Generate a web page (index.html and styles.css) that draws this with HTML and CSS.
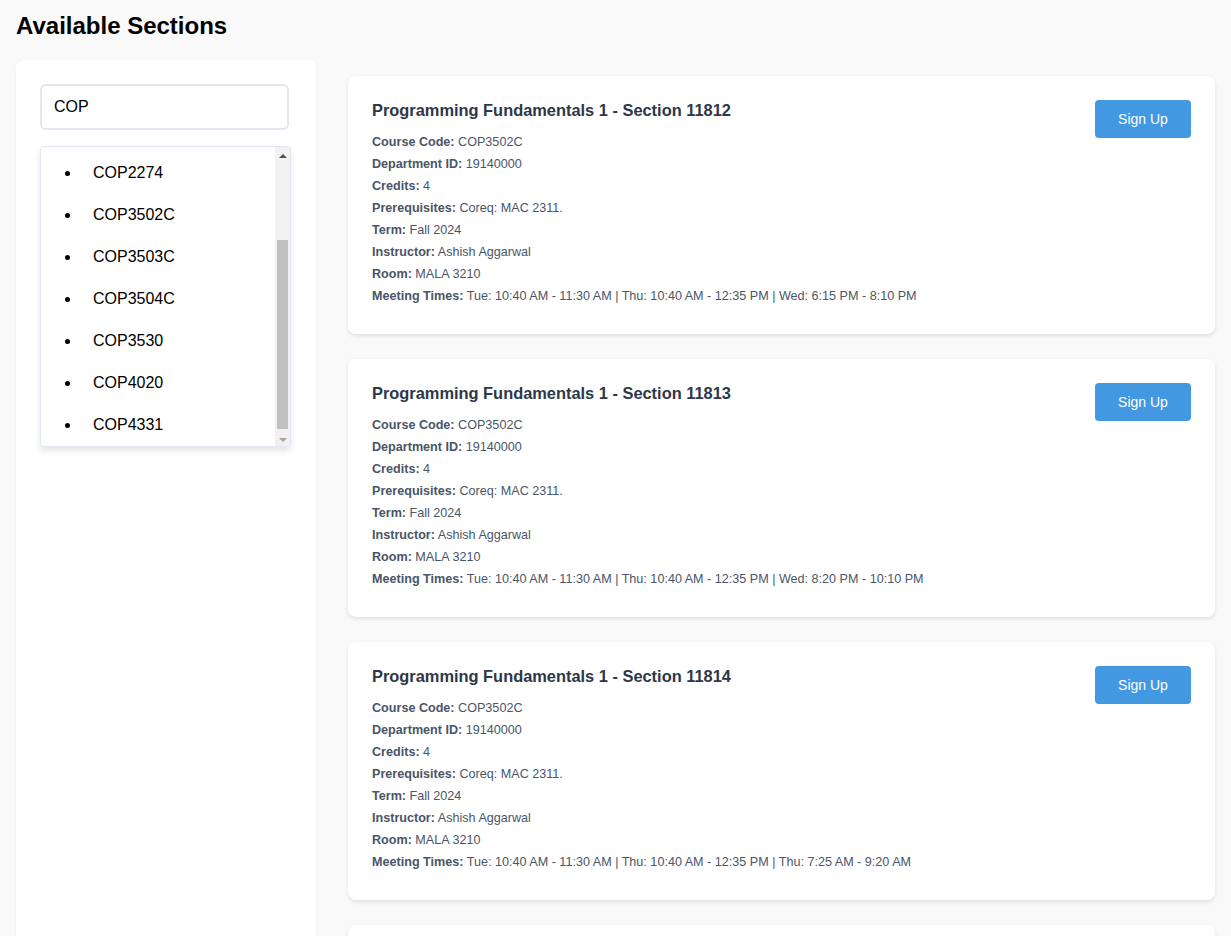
FILE: index.html
```html
<!DOCTYPE html>
<html lang="en">
<head>
<meta charset="utf-8">
<title>Available Sections</title>
<link rel="stylesheet" href="styles.css">
</head>
<body>
<div class="page">
  <h1 class="page-title">Available Sections</h1>
  <div class="layout">
    <aside class="sidebar">
      <input class="search" type="text" value="COP">
      <div class="dropdown">
        <div class="list-viewport">
          <ul class="course-list">
            <li>COP2220</li>
            <li>COP2271</li>
            <li>COP2273</li>
            <li>COP2274</li>
            <li>COP3502C</li>
            <li>COP3503C</li>
            <li>COP3504C</li>
            <li>COP3530</li>
            <li>COP4020</li>
            <li>COP4331</li>
          </ul>
        </div>
        <div class="scrollbar">
          <div class="sb-btn sb-up"><span class="tri-up"></span></div>
          <div class="sb-track"><div class="sb-thumb"></div></div>
          <div class="sb-btn sb-down"><span class="tri-down"></span></div>
        </div>
      </div>
    </aside>
    <main class="sections">
      <div class="card">
        <div class="card-body">
          <h3 class="card-title">Programming Fundamentals 1 - Section 11812</h3>
          <p><b>Course Code:</b> COP3502C</p>
          <p><b>Department ID:</b> 19140000</p>
          <p><b>Credits:</b> 4</p>
          <p><b>Prerequisites:</b> Coreq: MAC 2311.</p>
          <p><b>Term:</b> Fall 2024</p>
          <p><b>Instructor:</b> Ashish Aggarwal</p>
          <p><b>Room:</b> MALA 3210</p>
          <p><b>Meeting Times:</b> Tue: 10:40 AM - 11:30 AM | Thu: 10:40 AM - 12:35 PM | Wed: 6:15 PM - 8:10 PM</p>
        </div>
        <button class="signup">Sign Up</button>
      </div>
      <div class="card">
        <div class="card-body">
          <h3 class="card-title">Programming Fundamentals 1 - Section 11813</h3>
          <p><b>Course Code:</b> COP3502C</p>
          <p><b>Department ID:</b> 19140000</p>
          <p><b>Credits:</b> 4</p>
          <p><b>Prerequisites:</b> Coreq: MAC 2311.</p>
          <p><b>Term:</b> Fall 2024</p>
          <p><b>Instructor:</b> Ashish Aggarwal</p>
          <p><b>Room:</b> MALA 3210</p>
          <p><b>Meeting Times:</b> Tue: 10:40 AM - 11:30 AM | Thu: 10:40 AM - 12:35 PM | Wed: 8:20 PM - 10:10 PM</p>
        </div>
        <button class="signup">Sign Up</button>
      </div>
      <div class="card">
        <div class="card-body">
          <h3 class="card-title">Programming Fundamentals 1 - Section 11814</h3>
          <p><b>Course Code:</b> COP3502C</p>
          <p><b>Department ID:</b> 19140000</p>
          <p><b>Credits:</b> 4</p>
          <p><b>Prerequisites:</b> Coreq: MAC 2311.</p>
          <p><b>Term:</b> Fall 2024</p>
          <p><b>Instructor:</b> Ashish Aggarwal</p>
          <p><b>Room:</b> MALA 3210</p>
          <p><b>Meeting Times:</b> Tue: 10:40 AM - 11:30 AM | Thu: 10:40 AM - 12:35 PM | Thu: 7:25 AM - 9:20 AM</p>
        </div>
        <button class="signup">Sign Up</button>
      </div>
      <div class="card">
        <div class="card-body">
          <h3 class="card-title">Programming Fundamentals 1 - Section 11815</h3>
          <p><b>Course Code:</b> COP3502C</p>
          <p><b>Department ID:</b> 19140000</p>
          <p><b>Credits:</b> 4</p>
          <p><b>Prerequisites:</b> Coreq: MAC 2311.</p>
          <p><b>Term:</b> Fall 2024</p>
          <p><b>Instructor:</b> Ashish Aggarwal</p>
          <p><b>Room:</b> MALA 3210</p>
          <p><b>Meeting Times:</b> Tue: 10:40 AM - 11:30 AM | Thu: 10:40 AM - 12:35 PM | Thu: 9:35 AM - 11:30 AM</p>
        </div>
        <button class="signup">Sign Up</button>
      </div>
    </main>
  </div>
</div>
</body>
</html>
```
FILE: styles.css
```css
html, body {
  margin: 0;
  padding: 0;
}
body {
  background: #f9f9f9;
  font-family: "Liberation Sans", Arial, sans-serif;
  color: #000;
}
.page {
  padding: 12px 16px 0;
}
.page-title {
  margin: 0 0 20px;
  font-size: 24px;
  font-weight: bold;
  line-height: 28px;
}
.layout {
  display: flex;
  gap: 32px;
  align-items: stretch;
}
.sidebar {
  width: 300px;
  flex: 0 0 300px;
  box-sizing: border-box;
  background: #fff;
  border-radius: 8px;
  padding: 24px;
  box-shadow: 0 1px 3px rgba(0,0,0,0.05);
}
.search {
  display: block;
  width: 249px;
  height: 46px;
  box-sizing: border-box;
  border: 2px solid #e2e8f0;
  border-radius: 6px;
  padding: 0 12px;
  font-family: "Liberation Sans", Arial, sans-serif;
  font-size: 16px;
  color: #000;
  outline: none;
  margin-bottom: 16px;
}
.dropdown {
  width: 251px;
  height: 301px;
  box-sizing: border-box;
  border: 1px solid #e2e8f0;
  border-radius: 4px;
  background: #fff;
  box-shadow: 0 4px 6px rgba(0,0,0,0.1);
  display: flex;
  overflow: hidden;
}
.list-viewport {
  flex: 1 1 auto;
  overflow: hidden;
  display: flex;
  flex-direction: column-reverse;
}
.course-list {
  margin: 0;
  padding: 0 0 0 40px;
  flex: 0 0 auto;
}
.course-list li {
  padding: 12px 12px;
  font-size: 16px;
  line-height: 18px;
}
.scrollbar {
  flex: 0 0 15px;
  width: 15px;
  background: #f1f1f1;
  display: flex;
  flex-direction: column;
}
.sb-btn {
  flex: 0 0 14px;
  display: flex;
  align-items: center;
  justify-content: center;
}
.tri-up {
  width: 0;
  height: 0;
  border-left: 4px solid transparent;
  border-right: 4px solid transparent;
  border-bottom: 4px solid #505050;
  margin-top: 3px;
}
.tri-down {
  width: 0;
  height: 0;
  border-left: 4px solid transparent;
  border-right: 4px solid transparent;
  border-top: 4px solid #a3a3a3;
  margin-top: 1px;
}
.sb-track {
  flex: 1 1 auto;
  padding: 79px 2px 0;
}
.sb-thumb {
  height: 189px;
  background: #c1c1c1;
}
.sections {
  flex: 1 1 auto;
  display: flex;
  flex-direction: column;
  gap: 25px;
  padding-top: 16px;
}
.card {
  background: #fff;
  border-radius: 8px;
  box-shadow: 0 2px 4px rgba(0,0,0,0.1);
  padding: 24px 24px 27px;
  display: flex;
  justify-content: space-between;
  align-items: flex-start;
}
.card-body {
  padding-top: 1px;
}
.card-title {
  margin: 0 0 12px;
  font-size: 16.4px;
  line-height: 18px;
  font-weight: bold;
  color: #2d3748;
}
.card-body p {
  margin: 0;
  font-size: 12.6px;
  line-height: 22px;
  color: #4a5568;
}
.card-body b {
  color: #4a5568;
}
.signup {
  width: 96px;
  height: 38px;
  border: none;
  border-radius: 4px;
  background: #4299e1;
  color: #fff;
  font-family: "Liberation Sans", Arial, sans-serif;
  font-size: 14px;
  cursor: pointer;
  flex: 0 0 auto;
}
```
